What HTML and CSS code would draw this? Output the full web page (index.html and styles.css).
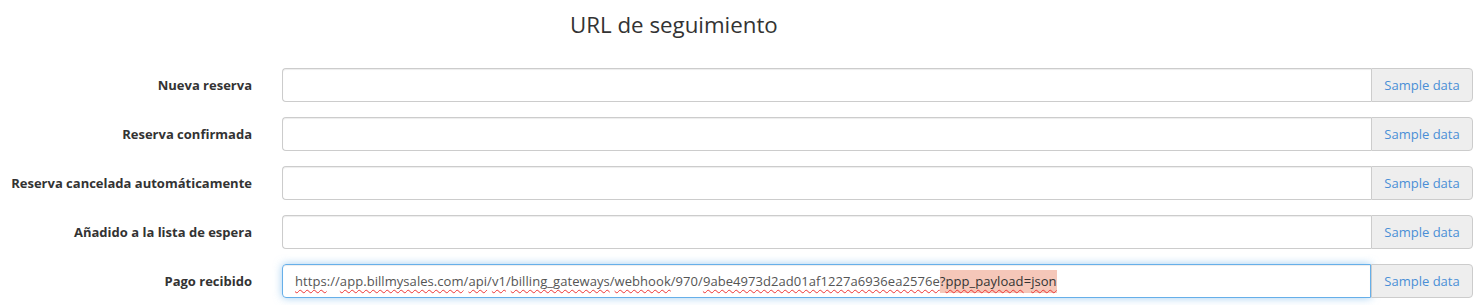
FILE: index.html
```html
<!DOCTYPE html>
<html lang="es">
<head>
    <meta charset="UTF-8">
    <title>URL de seguimiento</title>
    <link rel="stylesheet" href="styles.css">
</head>
<body>
    <h3 class="title">URL de seguimiento</h3>
    <form class="form-horizontal">
        <div class="form-row">
            <label class="form-label">Nueva reserva</label>
            <div class="input-group">
                <div class="form-control"></div>
                <span class="addon"><a href="#">Sample data</a></span>
            </div>
        </div>
        <div class="form-row">
            <label class="form-label">Reserva confirmada</label>
            <div class="input-group">
                <div class="form-control"></div>
                <span class="addon"><a href="#">Sample data</a></span>
            </div>
        </div>
        <div class="form-row">
            <label class="form-label">Reserva cancelada automáticamente</label>
            <div class="input-group">
                <div class="form-control"></div>
                <span class="addon"><a href="#">Sample data</a></span>
            </div>
        </div>
        <div class="form-row">
            <label class="form-label">Añadido a la lista de espera</label>
            <div class="input-group">
                <div class="form-control"></div>
                <span class="addon"><a href="#">Sample data</a></span>
            </div>
        </div>
        <div class="form-row">
            <label class="form-label">Pago recibido</label>
            <div class="input-group">
                <div class="form-control focused"><span class="typo">https</span>://<span class="typo">app.billmysales.com</span>/<span class="typo">api</span>/<span class="typo">v1</span>/<span class="typo">billing_gateways</span>/<span class="typo">webhook</span>/970/<span class="typo">9abe4973d2ad01af1227a6936ea2576e</span><span class="mark">?<span class="typo">ppp_payload</span>=<span class="typo">json</span></span></div>
                <span class="addon"><a href="#">Sample data</a></span>
            </div>
        </div>
    </form>
</body>
</html>
```

FILE: styles.css
```css
body {
    font-family: "Open Sans", Arial, sans-serif;
    font-size: 13px;
    color: #333;
    margin: 0;
    padding: 0;
    background: #fff;
}

.title {
    font-size: 22.3px;
    font-weight: 400;
    margin: 0;
    padding: 9px 0 0 570px;
    line-height: 32px;
}

.form-horizontal {
    margin-top: 27px;
    padding-right: 8px;
}

.form-row {
    display: grid;
    grid-template-columns: 252px 1fr;
    column-gap: 30px;
    align-items: center;
    margin-bottom: 15px;
}

.form-label {
    text-align: right;
    font-weight: 700;
    font-size: 13px;
    color: #333;
}

.input-group {
    display: flex;
    height: 34px;
}

.form-control {
    flex: 1;
    box-sizing: border-box;
    height: 34px;
    padding: 0 12px;
    border: 1px solid #ccc;
    border-right: none;
    border-radius: 4px 0 0 4px;
    color: #555;
    font-size: 13px;
    letter-spacing: 0.06px;
    line-height: 32px;
    white-space: nowrap;
    overflow: hidden;
    box-shadow: inset 0 1px 1px rgba(0, 0, 0, 0.075);
}

.form-control.focused {
    border: 1px solid #66afe9;
    border-radius: 4px 0 0 4px;
    box-shadow: inset 0 1px 1px rgba(0, 0, 0, 0.075), 0 0 8px rgba(102, 175, 233, 0.6);
}

.typo {
    text-decoration: underline wavy #e33;
    text-decoration-thickness: 1px;
    text-underline-offset: 3px;
}

.mark {
    background: #f5c7b9;
    color: #333;
    padding: 2px 0 3px;
}

.addon {
    box-sizing: border-box;
    width: 102px;
    display: flex;
    align-items: center;
    justify-content: center;
    background: #eee;
    border: 1px solid #ccc;
    border-radius: 0 4px 4px 0;
}

.addon a {
    color: #4a8fd6;
    text-decoration: none;
    font-size: 13px;
}
```
